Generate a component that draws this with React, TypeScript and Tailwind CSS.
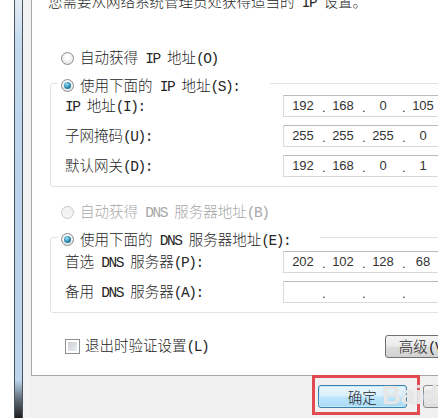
import React from "react";

function T({ s }: { s: string }) {
  const parts = s.split(/([\x00-\xff]+)/).filter(Boolean);
  return (
    <>
      {parts.map((p, i) =>
        /^[\x00-\xff]+$/.test(p) ? (
          <span key={i} className="font-['Liberation_Mono',monospace] tracking-[-1.45px] whitespace-pre">
            {p}
          </span>
        ) : (
          <span key={i}>{p}</span>
        )
      )}
    </>
  );
}

function Radio({ checked, disabled }: { checked?: boolean; disabled?: boolean }) {
  return (
    <span
      className={
        disabled
          ? "inline-flex w-[13px] h-[13px] shrink-0 rounded-full border border-[#c9c9c9] bg-[#f3f3f3] items-center justify-center"
          : "inline-flex w-[13px] h-[13px] shrink-0 rounded-full border border-[#8a8c8e] bg-[radial-gradient(circle_at_50%_40%,#ffffff_20%,#d6d8da)] items-center justify-center"
      }
    >
      {checked && (
        <span className="w-[7px] h-[7px] rounded-full bg-[radial-gradient(circle_at_40%_35%,#9ee3f7,#2a86ad_55%,#145a78)]" />
      )}
    </span>
  );
}

function IpBox({ v }: { v: string[] }) {
  return (
    <div className="h-[22px] w-[190px] shrink-0 border border-[#d6d9de] border-t-[#b8bbc1] bg-white flex items-center font-['Liberation_Sans',sans-serif] text-[13px] text-[#333333]">
      {v.map((s, i) => (
        <React.Fragment key={i}>
          {i > 0 && <span className="w-[2px] shrink-0 overflow-visible leading-none pt-[2px]">.</span>}
          <span className="w-[38px] shrink-0 text-center">{s}</span>
        </React.Fragment>
      ))}
    </div>
  );
}

function Row({ label, v }: { label: string; v: string[] }) {
  return (
    <div className="flex items-center h-[22px]">
      <div className="w-[218px] shrink-0 leading-[18px] whitespace-nowrap">
        <T s={label} />
      </div>
      <IpBox v={v} />
    </div>
  );
}

function Group({ legend, rows, ptClass }: { legend: string; rows: { label: string; v: string[] }[]; ptClass: string }) {
  return (
    <fieldset className="ml-[2px] w-[440px] border border-[#dde4e9] rounded-[3px]">
      <legend className="ml-[7px] pl-[3px] pr-[30px] h-[18px] leading-[18px] bg-white">
        <span className="inline-flex items-center gap-[6px] h-[18px] whitespace-nowrap">
          <Radio checked />
          <span>
            <T s={legend} />
          </span>
        </span>
      </legend>
      <div className={ptClass}>
        {rows.map((r, i) => (
          <Row key={i} label={r.label} v={r.v} />
        ))}
      </div>
    </fieldset>
  );
}

export default function App() {
  return (
    <div className="relative w-[438px] h-[418px] overflow-hidden bg-white flex font-['Noto_Sans_CJK_SC',sans-serif] font-light text-[14.5px] text-[#262626]">
      <div className="w-[14px] shrink-0 bg-white" />
      <div className="w-[9px] shrink-0 border-x border-[#4a545e] bg-[linear-gradient(to_bottom,#e4ecf4_0px,#c3d9ee_45px,#b9d3ec_200px,#bcd5ed_380px,#5d6872_400px,#1e1e1e_418px)]" />
      <div className="w-[8px] shrink-0 bg-[#f3f3f3]" />
      <div className="flex flex-col shrink-0 w-[480px]">
        <div className="h-[376px] shrink-0 bg-white border-l border-b border-[#a7a7a7] pl-[16px] flex flex-col">
          <div className="mt-[-8px] h-[18px] leading-[18px] whitespace-nowrap">
            <T s="您需要从网络系统管理员处获得适当的 IP 设置。" />
          </div>
          <div className="mt-[39px] ml-[13px] h-[18px] flex items-center gap-[6px] whitespace-nowrap">
            <Radio />
            <span>
              <T s="自动获得 IP 地址(O)" />
            </span>
          </div>
          <div className="mt-[7px]">
            <Group
              legend="使用下面的 IP 地址(S):"
              ptClass="pl-[14px] pt-[3px] pb-[9px] flex flex-col gap-[8px]"
              rows={[
                { label: "IP 地址(I):", v: ["192", "168", "0", "105"] },
                { label: "子网掩码(U):", v: ["255", "255", "255", "0"] },
                { label: "默认网关(D):", v: ["192", "168", "0", "1"] },
              ]}
            />
          </div>
          <div className="mt-[16px] ml-[13px] h-[18px] flex items-center gap-[6px] whitespace-nowrap text-[#a8a8a8]">
            <Radio disabled />
            <span>
              <T s="自动获得 DNS 服务器地址(B)" />
            </span>
          </div>
          <div className="mt-[7px]">
            <Group
              legend="使用下面的 DNS 服务器地址(E):"
              ptClass="pl-[14px] pt-[5px] pb-[9px] flex flex-col gap-[8px]"
              rows={[
                { label: "首选 DNS 服务器(P):", v: ["202", "102", "128", "68"] },
                { label: "备用 DNS 服务器(A):", v: ["", "", "", ""] },
              ]}
            />
          </div>
          <div className="mt-[22px] ml-[17px] w-[420px] h-[23px] flex items-center justify-between">
            <div className="flex items-center gap-[5px] whitespace-nowrap">
              <span className="w-[15px] h-[15px] border border-[#8e8f8f] bg-white p-[2px] flex">
                <span className="flex-1 bg-[linear-gradient(135deg,#c9ccd1,#eef0f2)]" />
              </span>
              <span>
                <T s="退出时验证设置(L)" />
              </span>
            </div>
            <button className="w-[100px] h-[23px] border border-[#707070] rounded-[3px] bg-[linear-gradient(to_bottom,#f4f4f4_0%,#ebebeb_48%,#dddddd_52%,#d2d2d2_100%)] whitespace-nowrap text-[#262626] leading-[20px]">
              <T s="高级(V)..." />
            </button>
          </div>
        </div>
        <div className="h-[42px] shrink-0 bg-[#f0f0f0] flex items-start pt-[9px]">
          <button className="ml-[287px] w-[92px] h-[23px] border border-[#3c7fb1] rounded-[3px] bg-[linear-gradient(to_bottom,#eaf6fd_0%,#d9f0fc_48%,#bee6fd_52%,#a7d9f5_100%)] shadow-[inset_0_0_0_1px_#c4eafc] leading-[20px] text-[#262626]">
            确定
          </button>
          <button className="ml-[16px] w-[92px] h-[23px] border border-[#8a8a8a] rounded-[3px] bg-[linear-gradient(to_bottom,#f4f4f4,#dddddd)] leading-[20px] text-[#262626]">
            取消
          </button>
        </div>
      </div>
      <div className="absolute left-[312px] top-[375px] w-[108px] h-[40px] border-[3px] border-[#e04a50]" />
      <div className="absolute left-[382px] top-[380px] text-[26px] leading-[30px] font-bold font-['Liberation_Sans',sans-serif] text-white/55 [text-shadow:0_0_1px_#c8c8c8] whitespace-nowrap">
        Baidu
      </div>
    </div>
  );
}
